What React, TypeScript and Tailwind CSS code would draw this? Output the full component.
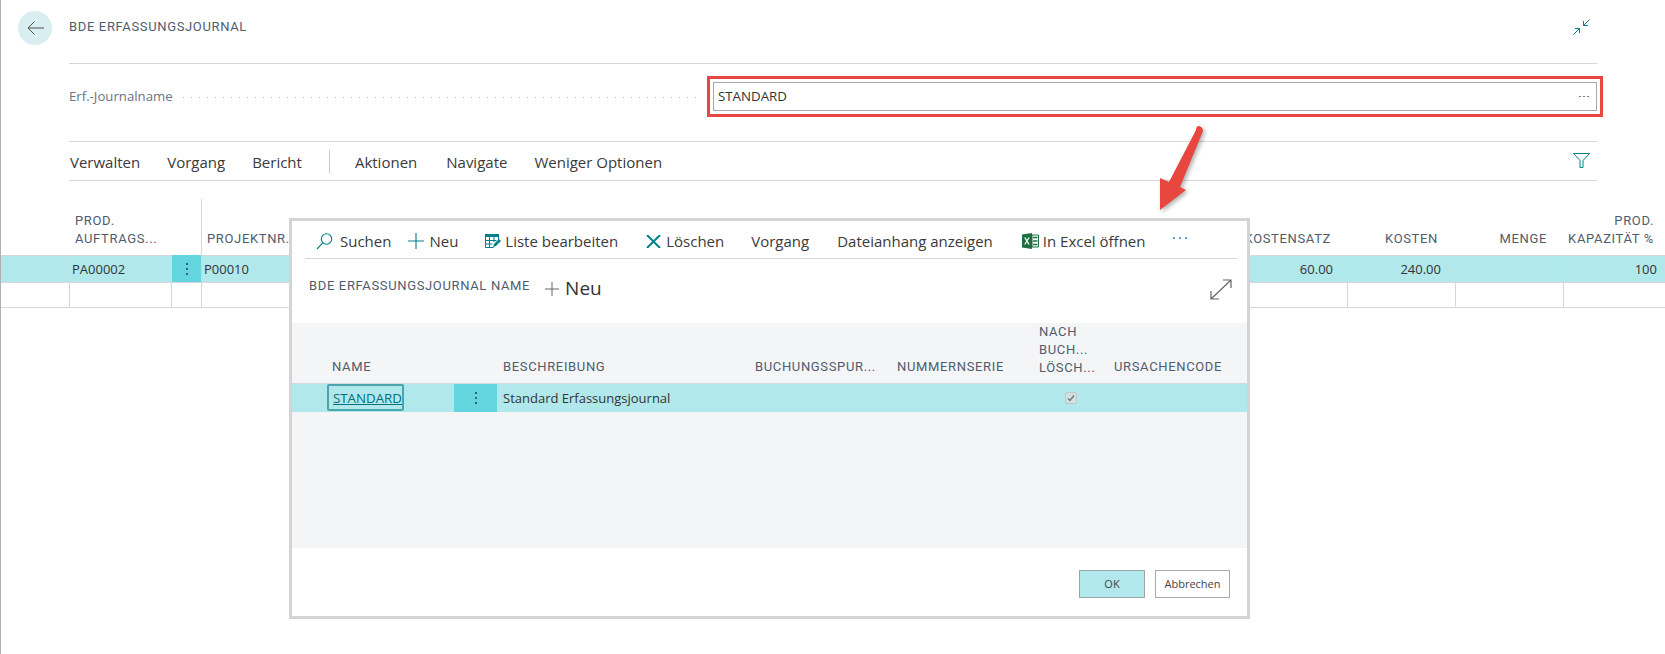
const FONT = "font-['Open_Sans','Noto_Sans',sans-serif]";
const HEAD = "font-['Roboto',sans-serif] font-normal text-[13px] leading-[18px] text-[#505c6d] tracking-[0.65px] uppercase whitespace-nowrap";

function Dots({ className = '' }: { className?: string }) {
  return (
    <div className={`flex flex-col items-center justify-center gap-[3px] bg-[#62d5df] ${className}`}>
      <i className="w-[2px] h-[2px] rounded-full bg-[#2a3a42]" />
      <i className="w-[2px] h-[2px] rounded-full bg-[#2a3a42]" />
      <i className="w-[2px] h-[2px] rounded-full bg-[#2a3a42]" />
    </div>
  );
}

function MainTable() {
  const line = 'border-l border-[#d5d7dc]';
  return (
    <div className="mt-[18px] grid grid-cols-[68px_102px_30px_1fr_108px_108px_108px_102px] text-[13px] text-[#333]">
      {/* header */}
      <div />
      <div className={`${HEAD} pl-[6px] pb-[7px] self-end`}>Prod.<br />Auftrags...</div>
      <div />
      <div className={`${HEAD} ${line} h-[56px] flex items-end pl-[5px] pb-[7px]`}>Projektnr.</div>
      <div className={`${HEAD} self-end text-right pb-[7px] pr-[16px]`}>Kostensatz</div>
      <div className={`${HEAD} self-end text-right pb-[7px] pr-[17px]`}>Kosten</div>
      <div className={`${HEAD} self-end text-right pb-[7px] pr-[16px]`}>Menge</div>
      <div className={`${HEAD} self-end text-right pb-[7px] pr-[11px]`}>Prod.<br />Kapazität %</div>
      {/* selected row */}
      <div className="h-[27px] bg-[#b0e8ec] border-t border-[#d5d7dc]" />
      <div className="h-[27px] bg-[#b0e8ec] border-t border-l border-[#d5d7dc] pl-[2px] leading-[27px]">PA00002</div>
      <Dots className="h-[27px] border-l border-[#d5d7dc]" />
      <div className="h-[27px] bg-[#b0e8ec] border-t border-l border-[#d5d7dc] pl-[2px] leading-[27px]">P00010</div>
      <div className="h-[27px] bg-[#b0e8ec] border-t border-[#d5d7dc] text-right pr-[14px] leading-[27px]">60.00</div>
      <div className="h-[27px] bg-[#b0e8ec] border-t border-l border-[#d5d7dc] text-right pr-[14px] leading-[27px]">240.00</div>
      <div className="h-[27px] bg-[#b0e8ec] border-t border-l border-[#d5d7dc]" />
      <div className="h-[27px] bg-[#b0e8ec] border-t border-l border-[#d5d7dc] text-right pr-[8px] leading-[27px]">100</div>
      {/* empty row */}
      <div className="h-[26px] border-y border-[#d5d7dc]" />
      <div className="h-[26px] border-y border-l border-[#d5d7dc]" />
      <div className="h-[26px] border-y border-l border-[#d5d7dc]" />
      <div className="h-[26px] border-y border-l border-[#d5d7dc]" />
      <div className="h-[26px] border-y border-[#d5d7dc]" />
      <div className="h-[26px] border-y border-l border-[#d5d7dc]" />
      <div className="h-[26px] border-y border-l border-[#d5d7dc]" />
      <div className="h-[26px] border-y border-l border-[#d5d7dc]" />
    </div>
  );
}

function Dialog() {
  return (
    <div className="absolute left-[288px] top-[218px] w-[961px] h-[401px] border-[3px] border-[#d4d4d4] bg-white flex flex-col">
      <div className="ml-[13px] mr-[10px] h-[38px] pt-[3px] border-b border-[#d5d7dc] flex items-center text-[15px] text-[#3a3a3a] shrink-0">
        <svg width="17" height="17" viewBox="0 0 17 17" fill="none" stroke="#00808a" strokeWidth="1.1" className="ml-[11px]">
          <circle cx="10.5" cy="6" r="5.2" />
          <path d="M6.8 9.8 1 16" />
        </svg>
        <span className="ml-[7px]">Suchen</span>
        <svg width="16" height="16" viewBox="0 0 16 16" fill="none" stroke="#00808a" strokeWidth="1.1" className="ml-[17px]">
          <path d="M8 0v16M0 8h16" />
        </svg>
        <span className="ml-[5px]">Neu</span>
        <svg width="16" height="15" viewBox="0 0 16 15" className="ml-[27px]">
          <path d="M0 0h14v3H0z" fill="#00808a" />
          <path d="M.5 3v10.5h8M13.5 3v3M.5 6.5h11M.5 10h7M4.500 3v10M9 3v5" fill="none" stroke="#00808a" strokeWidth="1" />
          <path d="M8 13l1-3 5-5 2 2-5 5z" fill="#00808a" />
        </svg>
        <span className="ml-[4px]">Liste bearbeiten</span>
        <svg width="15" height="13" viewBox="0 0 15 13" fill="none" stroke="#00808a" strokeWidth="2" className="ml-[28px]">
          <path d="M1 0l13 13M14 0 1 13" />
        </svg>
        <span className="ml-[5px]">Löschen</span>
        <span className="ml-[27px]">Vorgang</span>
        <span className="ml-[28px]">Dateianhang anzeigen</span>
        <svg width="17" height="16" viewBox="0 0 17 16" className="ml-[29px]">
          <path d="M0 1.500 10 0v16L0 14.500z" fill="#1d6f42" />
          <path d="M10 2h6.500v12H10z" fill="#fff" stroke="#1d6f42" />
          <path d="M11 4.500h4.500M11 8h4.500M11 11.500h4.500" stroke="#1d6f42" strokeWidth="1.600" />
          <path d="M2.800 4.500 7 11.500M7 4.500l-4.200 7" stroke="#fff" strokeWidth="1.300" />
        </svg>
        <span className="ml-[4px]">In Excel öffnen</span>
        <span className="ml-[28px] -mt-[6px] flex gap-[4px]">
          <i className="w-[2px] h-[2px] rounded-full bg-[#2f80c0]" />
          <i className="w-[2px] h-[2px] rounded-full bg-[#2f80c0]" />
          <i className="w-[2px] h-[2px] rounded-full bg-[#2f80c0]" />
        </span>
      </div>

      <div className="h-[64px] shrink-0 flex items-start pl-[17px] pr-[15px]">
        <span className={`${HEAD} text-[13.5px] mt-[18px]`}>BDE Erfassungsjournal Name</span>
        <svg width="14" height="14" viewBox="0 0 14 14" fill="none" stroke="#666" strokeWidth="1" className="ml-[15px] mt-[23px]">
          <path d="M7 0v14M0 7h14" />
        </svg>
        <span className="ml-[6px] mt-[14px] text-[19px] leading-[30px] text-[#333]">Neu</span>
        <svg width="22" height="21" viewBox="0 0 22 21" fill="none" stroke="#666" strokeWidth="1.200" className="ml-auto mt-[20px]">
          <path d="M1 20 21 1M13 1h8v8M1 12v8h8" />
        </svg>
      </div>

      <div className="flex-1 bg-[#f4f5f7]">
        <div className="grid grid-cols-[35px_127px_43px_252px_142px_142px_75px_1fr]">
          <div />
          <div className={`${HEAD} self-end pl-[5px] pb-[7px]`}>Name</div>
          <div />
          <div className={`${HEAD} self-end pl-[6px] pb-[7px]`}>Beschreibung</div>
          <div className={`${HEAD} self-end pl-[6px] pb-[7px]`}>Buchungsspur...</div>
          <div className={`${HEAD} self-end pl-[6px] pb-[7px]`}>Nummernserie</div>
          <div className={`${HEAD} pl-[6px] pb-[7px] h-[60px]`}>Nach<br />Buch...<br />Lösch...</div>
          <div className={`${HEAD} self-end pl-[6px] pb-[7px]`}>Ursachencode</div>
        </div>
        <div className="grid grid-cols-[35px_127px_43px_252px_142px_142px_75px_1fr] h-[29px] bg-[#b0e8ec] border-t border-[#d5d7dc] text-[13px] text-[#333]">
          <div />
          <div>
            <div className="w-[77px] h-[27px] border-2 border-[#4ca5ac] rounded-[2px] pl-[4px] leading-[24px] text-[13.3px] text-[#00707a] underline overflow-hidden whitespace-nowrap">STANDARD</div>
          </div>
          <Dots />
          <div className="pl-[6px] leading-[28px]">Standard Erfassungsjournal</div>
          <div />
          <div />
          <div className="flex pl-[32px] pt-[8px]">
            <div className="w-[12px] h-[12px] rounded-[2px] bg-[#d3dfe1] border border-[#c0c8cb] flex items-center justify-center">
              <svg width="8" height="8" viewBox="0 0 8 8" fill="none" stroke="#6f7a80" strokeWidth="1.500">
                <path d="M1 4.500 3 6.500 7 1.500" />
              </svg>
            </div>
          </div>
          <div />
        </div>
      </div>

      <div className="h-[68px] shrink-0 flex items-start justify-end gap-[10px] pt-[22px] pr-[17px] text-[11px] text-[#444]">
        <button className="w-[66px] h-[28px] bg-[#b0e8ec] border border-[#9aa5a8]">OK</button>
        <button className="w-[75px] h-[28px] bg-white border border-[#aaa]">Abbrechen</button>
      </div>
    </div>
  );
}

export default function App() {
  return (
    <div className={`relative h-[654px] overflow-hidden bg-white border-l border-[#b0b0b0] ${FONT}`}>
      <div className="flex items-center pt-[11px] pl-[17px] pr-[75px]">
        <button className="w-[34px] h-[34px] rounded-full bg-[#d8eef0] flex items-center justify-center">
          <svg width="17" height="14" viewBox="0 0 17 14" fill="none" stroke="#555" strokeWidth="1">
            <path d="M17 7H1M7.500.5 1 7l6.500 6.500" />
          </svg>
        </button>
        <h1 className={`${HEAD} ml-[17px] -mt-[2px]`}>BDE Erfassungsjournal</h1>
        <svg width="17" height="16" viewBox="0 0 17 16" fill="none" stroke="#00808a" strokeWidth="1" className="ml-auto -mt-[2px]">
          <path d="M16.500.5 10.500 6.500M10.500 2v4.500H15M.5 15.500l6-6M6.500 14V9.500H2" />
        </svg>
      </div>

      <div className="mx-[68px] mt-[18px] border-t border-[#d5d7dc]" />

      <div className="ml-[68px] mr-[62px] mt-[12px] flex items-center">
        <span className="text-[13.2px] text-[#6a7585]">Erf.-Journalname</span>
        <div className="flex-1 mx-[10px] mt-[2px] h-px [background:repeating-linear-gradient(90deg,#b4b8bf_0_1px,transparent_1px_8px)]" />
        <div className="w-[896px] h-[41px] border-[3px] border-[#e8473f] p-[3px]">
          <div className="h-full border border-[#a8a8a8] flex items-center justify-between pl-[4px] pr-[7px] text-[13.3px] text-[#333]">
            <span>STANDARD</span>
            <span className="flex gap-[2px]">
              <i className="w-[2px] h-px bg-[#777]" />
              <i className="w-[2px] h-px bg-[#777]" />
              <i className="w-[2px] h-px bg-[#777]" />
            </span>
          </div>
        </div>
      </div>

      <div className="mx-[68px] mt-[24px] h-[40px] pt-[3px] border-y border-[#d5d7dc] flex items-center gap-[27px] pl-[1px] text-[15px] text-[#3a3a3a]">
        <span>Verwalten</span>
        <span>Vorgang</span>
        <span>Bericht</span>
        <div className="w-px h-[23px] -mt-[3px] -mr-[2px] bg-[#c8c8c8]" />
        <span>Aktionen</span>
        <span className="ml-[2px]">Navigate</span>
        <span>Weniger Optionen</span>
        <svg width="17" height="15" viewBox="0 0 17 15" fill="none" stroke="#00808a" strokeWidth="1" className="ml-auto mr-[7px] -mt-[5px]">
          <path d="M.5.500h16L10 7.500v7H7v-7z" />
        </svg>
      </div>

      <MainTable />
      <Dialog />

      {/* red annotation arrow */}
      <svg width="52" height="92" viewBox="0 0 52 92" className="absolute left-[1154px] top-[123px] drop-shadow-[2px_2px_2px_rgba(0,0,0,0.3)]">
        <path d="M44 3Q41 3 41 7L14 59 5 55V87L31 67 25 64 48 8Q48 4 44 3z" fill="#e8473f" />
      </svg>
    </div>
  );
}
